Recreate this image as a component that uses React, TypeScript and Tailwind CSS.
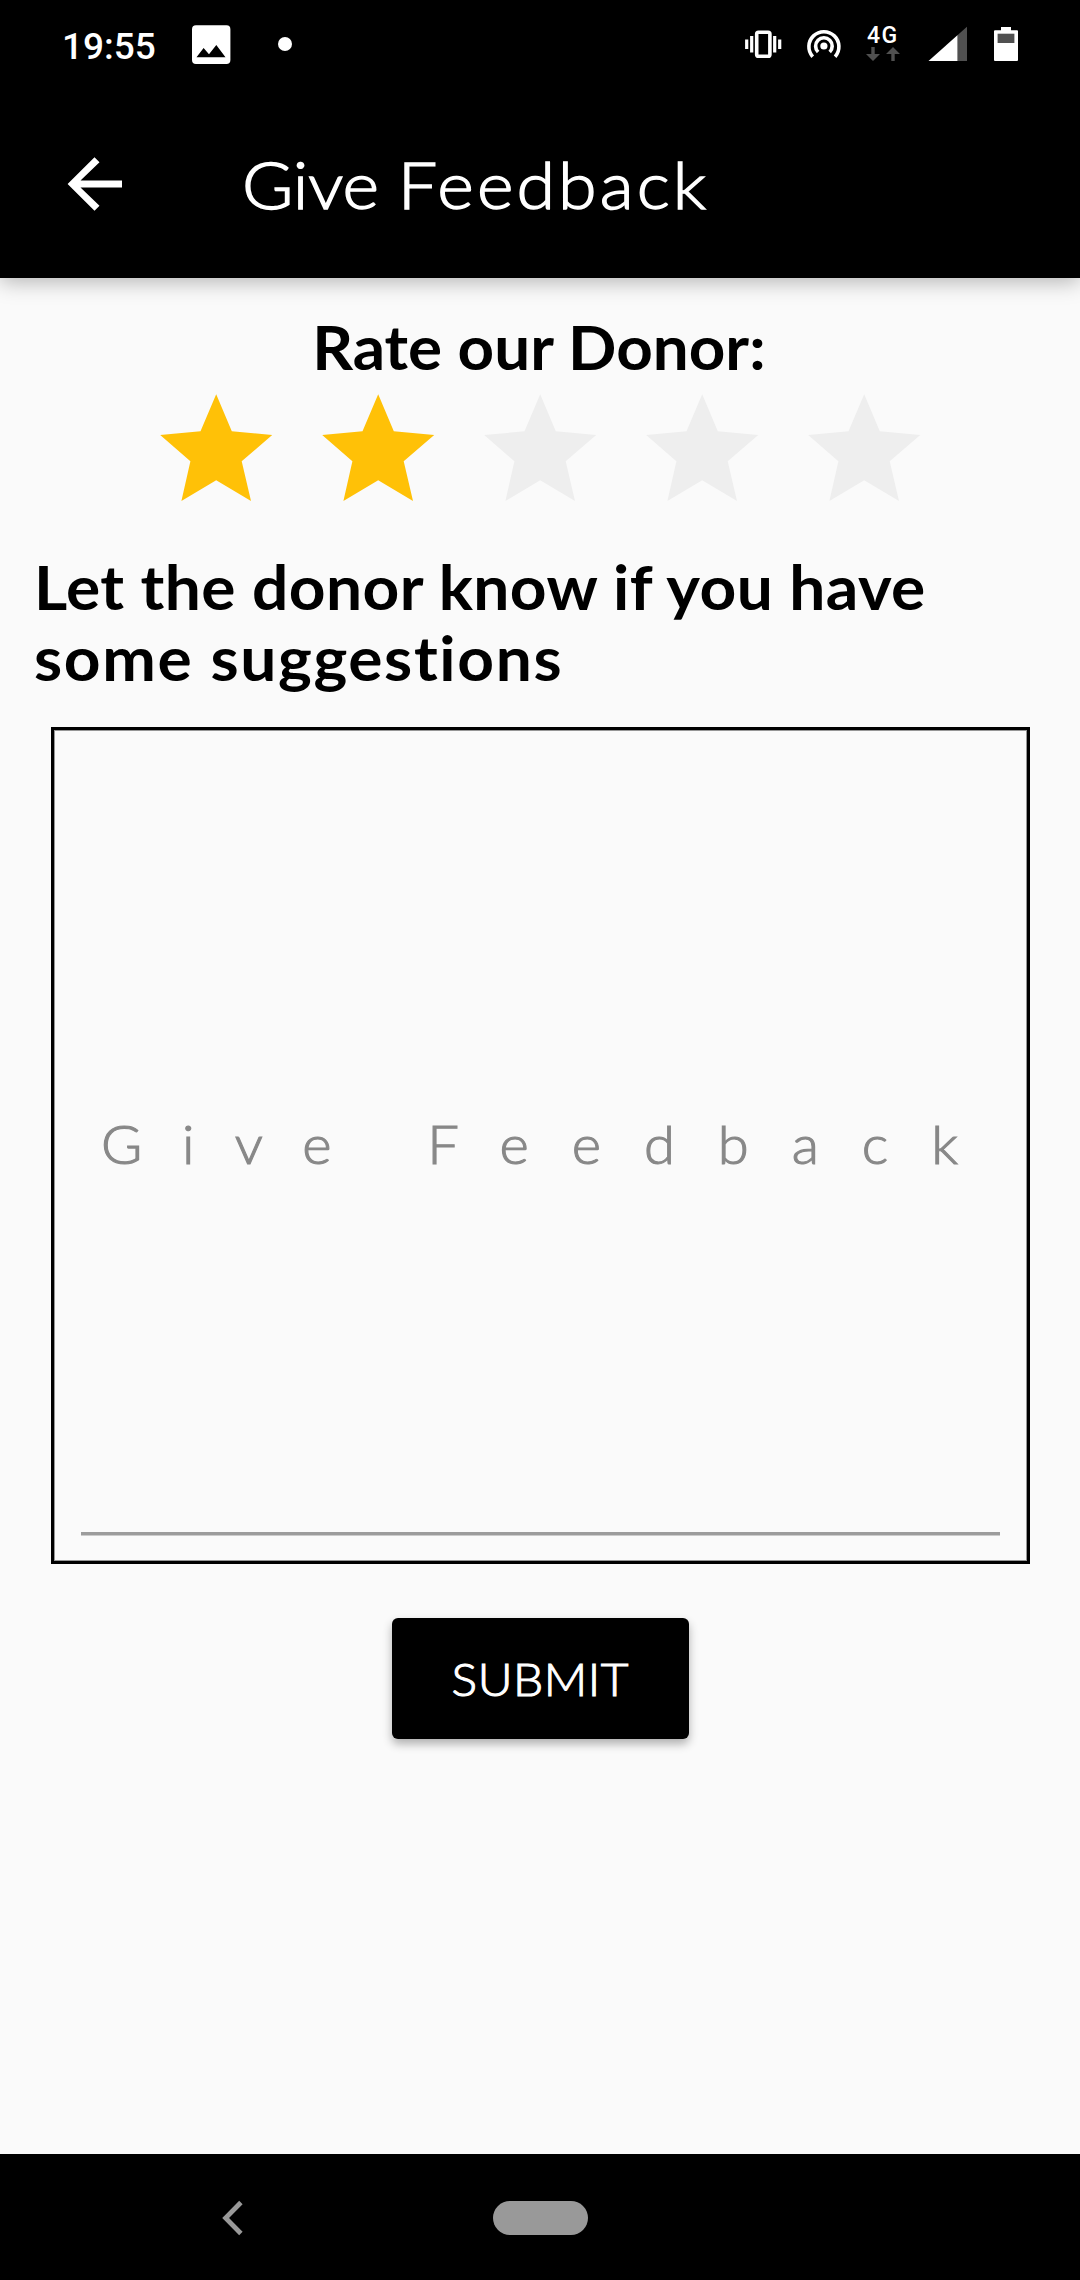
const STARS = [true, true, false, false, false];

function Star({ filled }: { filled: boolean }) {
  return (
    <svg
      className={filled ? "h-[120px] w-[162px] text-[#ffc107]" : "h-[120px] w-[162px] text-[#eeeeee]"}
      viewBox="0 0 162 120"
    >
      <path
        fill="currentColor"
        d="M81.2 13.3 96.8 50.3 137.2 54 106.7 80.3 116 120 81.2 99.2 46.4 120 55.4 80.3 25.2 54 65.5 50.3Z"
      />
    </svg>
  );
}

function StatusBar() {
  return (
    <div className="flex h-[88px] items-start justify-between pl-[62px] pr-[62px] text-white">
      <div className="flex">
        <span className="mt-[3px] w-[130px] font-[Roboto,sans-serif] text-[37px] font-medium leading-[88px]">
          19:55
        </span>
        <svg className="h-[88px] w-[39px]" viewBox="192 0 39 88">
          <path
            fill="#fff"
            fillRule="evenodd"
            d="M196 25.3H226.5Q230.4 25.3 230.4 29.3V60Q230.4 64 226.4 64H196Q192 64 192 60V29.3Q192 25.3 196 25.3ZM196.5 57.3H225.5L216.3 45 209 54.3 203.6 48Z"
          />
        </svg>
        <span className="ml-[47px] mt-[37px] size-[14px] rounded-full bg-white" />
      </div>

      <div className="flex">
        <svg className="h-[88px] w-[38px]" viewBox="744 0 38 88">
          <rect x="756.7" y="32.2" width="13.2" height="24" rx="1.8" fill="none" stroke="#fff" strokeWidth="3.6" />
          <path
            d="M746.7 39.5V49M751.7 36V52.5M774.7 36V52.5M779.7 39.5V49"
            stroke="#fff"
            strokeWidth="3.2"
          />
        </svg>
        <svg className="ml-6 h-[88px] w-[36px]" viewBox="805.5 0 36 88">
          <circle cx="823.4" cy="46" r="3.6" fill="#fff" />
          <path
            d="M812.2 56.7A15 15 0 1 1 834.6 56.7M817.6 52A8.3 8.3 0 1 1 829.2 52"
            fill="none"
            stroke="#fff"
            strokeWidth="3.6"
          />
        </svg>
        <div className="ml-6 flex w-[34px] flex-col pt-[23px]">
          <span className="ml-[1px] font-[Roboto,sans-serif] text-[23px] font-medium leading-[26px] tracking-[1.5px]">
            4G
          </span>
          <svg className="-mt-[2px] h-[14px] w-[34px]" viewBox="0 0 34 14">
            <path fill="#505050" d="M5.3 0H8.7V7H14L7 14 0 7H5.3ZM25.3 14H28.7V7H34L27 0 20 7H25.3Z" />
          </svg>
        </div>
        <svg className="ml-[28px] h-[88px] w-[39px]" viewBox="928 0 39 88">
          <path fill="#fff" d="M928.5 61 957.7 35V61Z" />
          <path fill="#505050" d="M957.7 35 967 26.7V61H957.7Z" />
        </svg>
        <svg className="ml-[27px] h-[88px] w-[24px]" viewBox="994 0 24 88">
          <path
            fill="#fff"
            d="M1001 27H1011V30.3H1017Q1018 30.3 1018 31.3V60Q1018 61 1017 61H995Q994 61 994 60V31.3Q994 30.3 995 30.3H1001Z"
          />
          <rect x="997.6" y="33.7" width="16.8" height="9.3" fill="#505050" />
        </svg>
      </div>
    </div>
  );
}

export default function App() {
  return (
    <div className="flex h-[2280px] w-[1080px] flex-col bg-[#fafafa] font-[Lato,sans-serif] text-black">
      <header className="bg-black shadow-[0_4px_20px_rgba(0,0,0,0.28)]">
        <StatusBar />
        <div className="flex h-[190px] items-center pl-[67px] text-white">
          <svg className="mt-[1px] h-[56px] w-[56px]" viewBox="0 0 56 56">
            <path fill="#fff" d="M55 24.5V31.5H13.5L32.5 49.8 27.5 54.8 .6 28 27.5 1.2 32.5 6.2 13.5 24.5Z" />
          </svg>
          <h1 className="ml-[119px] mt-[1px] origin-left scale-x-[1.06] whitespace-nowrap text-[66px] font-light leading-[80px] [-webkit-text-stroke:1.4px_white]">
            <span className="-tracking-[0.1px]">Give </span>
            <span className="tracking-[2.9px]">Feedback</span>
          </h1>
        </div>
      </header>

      <main className="flex flex-1 flex-col items-center pt-[33px]">
        <h2 className="mr-[2px] scale-x-[1.045] whitespace-nowrap text-[61px] font-bold leading-[71px]">
          Rate our Donor:
        </h2>
        <div className="-mt-[1px] flex h-[170px] w-[810px]">
          {STARS.map((filled, i) => (
            <Star key={i} filled={filled} />
          ))}
        </div>
        <h2 className="flex flex-col items-start self-start pl-[34px] text-[61px] font-bold leading-[71px]">
          <span className="origin-left scale-x-[1.05] whitespace-nowrap tracking-[0.4px]">
            Let the donor know if you have
          </span>
          <span className="origin-left scale-x-[1.05] whitespace-nowrap tracking-[1.55px]">
            some suggestions
          </span>
        </h2>

        <div className="mt-[34px] flex h-[837px] w-[979px] flex-col border-[3px] border-black px-[27px] pb-[26px] pt-[26px] shadow-[inset_0_0_0_1px_rgba(0,0,0,0.4)]">
          <div className="flex flex-1 items-center border-b-[3px] border-[#9c9c9c] pl-[20px] shadow-[0_1px_0_rgba(156,156,156,0.5)]">
            <span className="origin-left scale-x-[1.04] whitespace-nowrap text-[54px] font-light leading-[66px] text-[#888888] [-webkit-text-stroke:1.1px_#888888]">
              <span className="tracking-[38.6px]">Give </span>
              <span className="tracking-[41.3px]">Feedback</span>
            </span>
          </div>
        </div>

        <button className="mt-[54px] flex h-[121px] w-[297px] items-center justify-center rounded-[6px] bg-black pt-[1px] text-white shadow-[0_5px_10px_rgba(0,0,0,0.3)]">
          <span className="scale-x-[1.04] text-[46px] font-light leading-[56px] tracking-[0.5px] [-webkit-text-stroke:1.1px_white]">
            SUBMIT
          </span>
        </button>
      </main>

      <nav className="flex h-[126px] items-center bg-black pl-[222px] pt-[1px]">
        <svg className="h-[36px] w-[22px]" viewBox="0 0 22 36">
          <path d="M18.9 2.5 3.6 18 18.9 33.5" fill="none" stroke="#999" strokeWidth="4.8" />
        </svg>
        <div className="ml-[249px] h-[34px] w-[95px] rounded-full bg-[#999999]" />
      </nav>
    </div>
  );
}
